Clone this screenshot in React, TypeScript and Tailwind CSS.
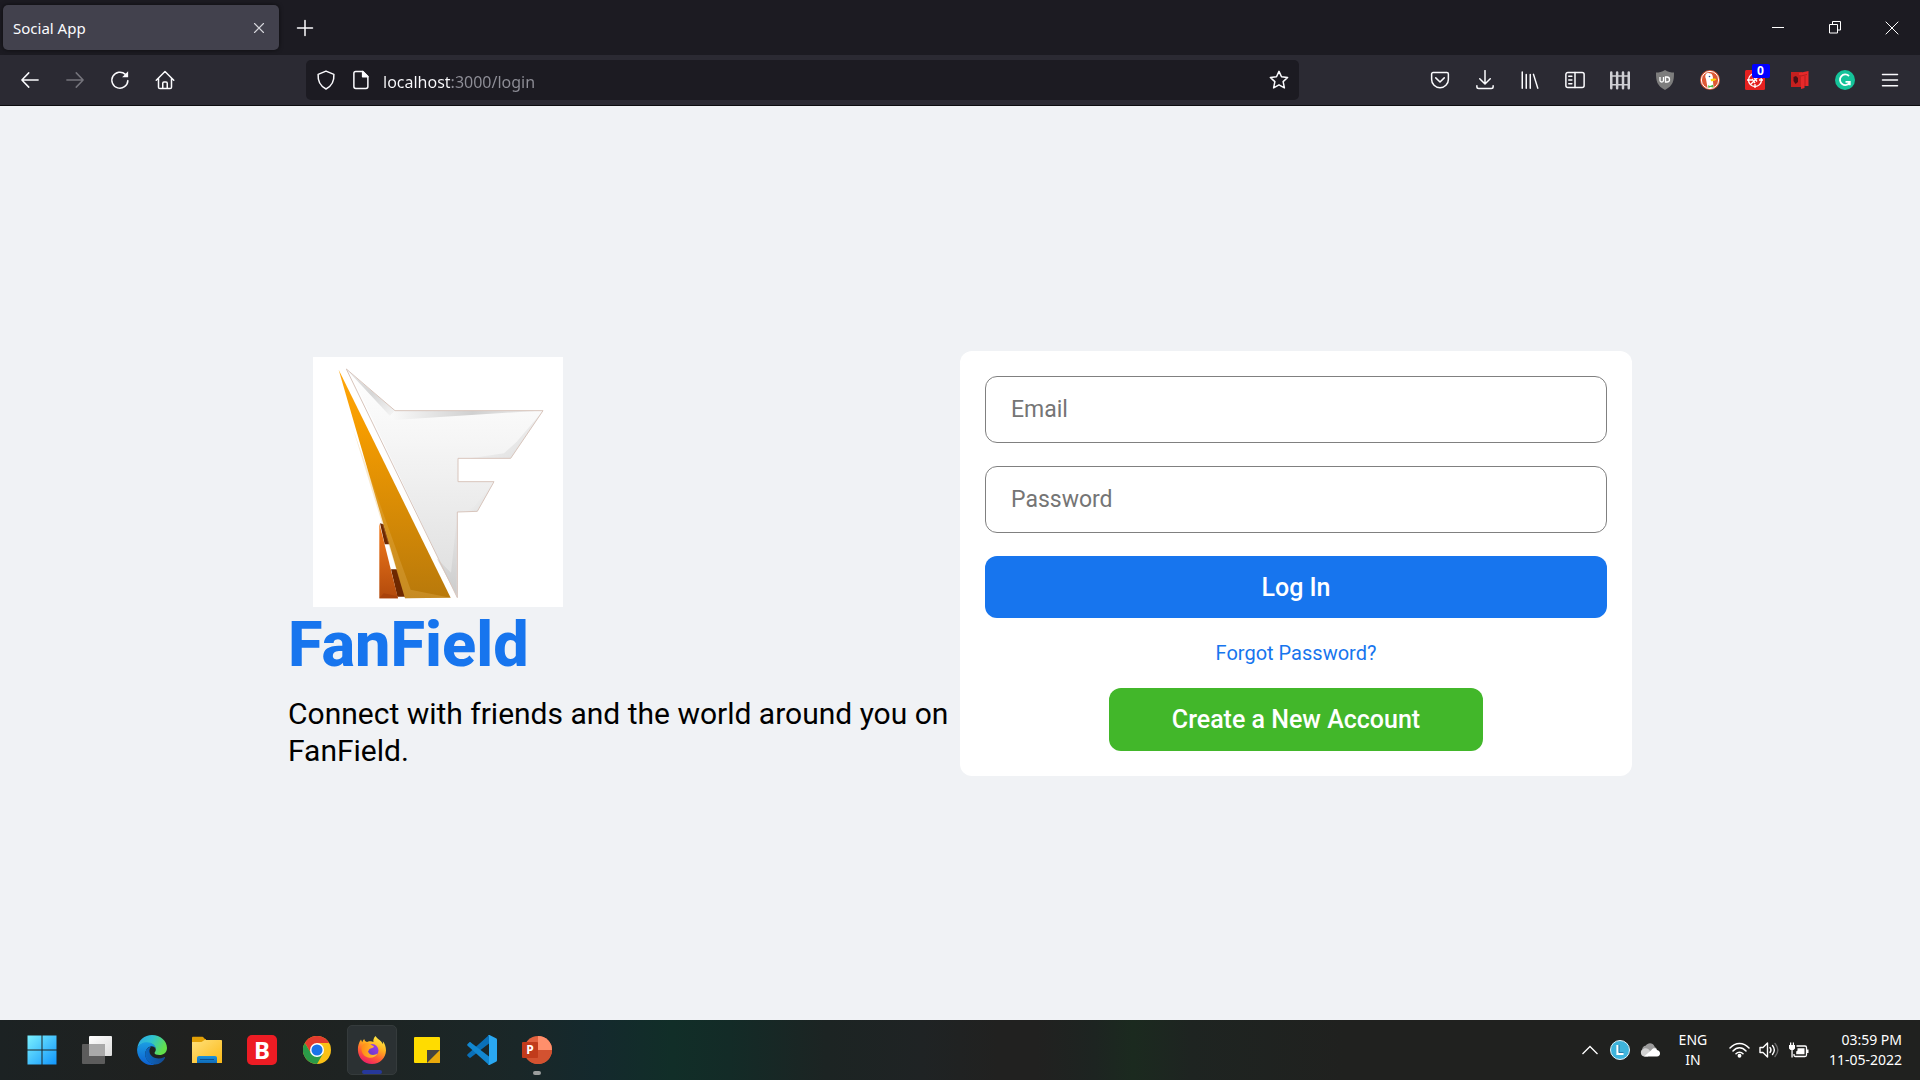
import type { ReactNode } from "react";

function IconButton({ label, className, children }: { label: string; className: string; children: ReactNode }) {
  return (
    <button type="button" aria-label={label} className={`flex shrink-0 items-center justify-center ${className}`}>
      {children}
    </button>
  );
}

function Line({ children, size = 20, color = "#fbfbfe", width = 1.2 }: { children: ReactNode; size?: number; color?: string; width?: number }) {
  return (
    <svg width={size} height={size} viewBox="0 0 16 16" fill="none" stroke={color} strokeWidth={width} strokeLinecap="round" strokeLinejoin="round" aria-hidden="true">
      {children}
    </svg>
  );
}

/* ---------- Browser chrome ---------- */

function TitleBar() {
  return (
    <div className="flex h-[55px] items-center bg-[#1c1b22] pl-[3px]">
      <div className="flex h-[45px] w-[276px] items-center justify-between rounded-[5px] bg-[#42414d] pr-2.5 pl-2.5 shadow-[0_0_4px_rgba(0,0,0,0.6)]">
        <button type="button" className="text-[15px] leading-5 text-[#fbfbfe]">Social App</button>
        <IconButton label="Close tab" className="size-5">
          <Line size={16} color="#d6d6dc" width={1.1}><path d="M3.500 3.500l9 9M12.500 3.500l-9 9" /></Line>
        </IconButton>
      </div>
      <IconButton label="New tab" className="ml-1.5 size-10">
        <Line size={20} width={1.2}><path d="M8 2v12M2 8h12" /></Line>
      </IconButton>
      <div className="ml-auto flex h-full">
        <IconButton label="Minimize" className="w-[57px]">
          <svg width="12" height="12" stroke="#fff" aria-hidden="true"><path d="M0 5.500h12" /></svg>
        </IconButton>
        <IconButton label="Restore" className="w-[57px]">
          <svg width="12" height="13" fill="none" stroke="#fff" aria-hidden="true"><path d="M.5 3.500h8v8.500h-8zM3.500 3.500v-3h8v8.500h-3" /></svg>
        </IconButton>
        <IconButton label="Close" className="w-[57px]">
          <svg width="14" height="14" stroke="#fff" aria-hidden="true"><path d="M.7.7l12.600 12.600M13.300.7L.7 13.300" /></svg>
        </IconButton>
      </div>
    </div>
  );
}

function UBlock() {
  return (
    <svg width="20" height="20" viewBox="0 0 20 20" aria-hidden="true">
      <path d="M10 0c3 2 6 2.500 9 2.500 0 9-1 13-9 17.500C2 15.500 1 11.500 1 2.500 4 2.500 7 2 10 0z" fill="#7d7d7d" />
      <path d="M5 7v3.500c0 2 3.500 2 3.500 0V7M10.500 7v5h1.500a2.500 2.500 0 0 0 0-5z" fill="none" stroke="#fff" strokeWidth="1.300" />
    </svg>
  );
}

function Duck() {
  return (
    <svg width="20" height="20" viewBox="0 0 20 20" aria-hidden="true">
      <circle cx="10" cy="10" r="10" fill="#de5833" />
      <circle cx="10" cy="10" r="8.600" fill="none" stroke="#fff" strokeWidth="1" />
      <path d="M6 4c1-1.500 5.500-1.500 6.500 1.500.8 2.500.5 4 .5 6l.5 6c-2 1-5 .8-6 .3L6 9C5 7.500 5 5 6 4z" fill="#fff" />
      <path d="M10.500 9.200c1.500-1 4-.8 5.800-.3.500 1-2 2-5.200 2.300z" fill="#fdd20a" />
      <path d="M8 15.200l2 .8 3-1.300.3 2.800-2.800-.6-2 1z" fill="#4cba3c" />
      <circle cx="9.500" cy="6.500" r=".8" fill="#2d4f8e" />
    </svg>
  );
}

function Target() {
  return (
    <span className="relative block">
      <svg width="20" height="20" viewBox="0 0 20 20" fill="none" stroke="#fff" strokeWidth="1.300" aria-hidden="true">
        <rect width="20" height="20" rx="1.500" fill="#e5201f" stroke="none" />
        <circle cx="10" cy="10" r="6.500" />
        <path d="M10 14v4M2 10h5M14 10h4M5.500 14.500l9-9M7 9l3 4M9 7.500l3 4" />
      </svg>
      <span className="absolute -top-1.5 left-[7px] flex h-3.5 w-[18px] items-center justify-center rounded-[2px] bg-[#0000ff] text-[12px] leading-3 font-bold text-white">0</span>
    </span>
  );
}

function Toolbar() {
  return (
    <div className="flex h-[51px] items-center border-b border-[#0c0c0f] bg-[#2b2a33] pl-[7px]">
      <IconButton label="Back" className="h-10 w-[45px]">
        <Line><path d="M14.500 8h-13M7 2.300L1.500 8 7 13.700" /></Line>
      </IconButton>
      <IconButton label="Forward" className="h-10 w-[45px]">
        <Line color="#75747c"><path d="M1.500 8h13M9 2.300L14.500 8 9 13.700" /></Line>
      </IconButton>
      <IconButton label="Reload" className="h-10 w-[45px]">
        <Line><path d="M14.300 8.500A6.400 6.400 0 1 1 12.300 3.500" /><path d="M14.500 1v4.800H9.700z" fill="#fbfbfe" stroke="none" /></Line>
      </IconButton>
      <IconButton label="Home" className="h-10 w-[45px]">
        <Line><path d="M1 8.200L8 1.200l7 7M2.800 6.800v6.900c0 .7.500 1.100 1.100 1.100h8.200c.7 0 1.100-.5 1.100-1.100V6.800M6.200 14.500v-4c0-.6.4-1 1-1h1.600c.6 0 1 .4 1 1v4" /></Line>
      </IconButton>
      <div className="mr-[118px] ml-[119px] flex h-10 min-w-0 flex-1 items-center rounded-[5px] bg-[#1c1b22] px-2.5">
        <IconButton label="Tracking protection" className="size-5">
          <Line><path d="M8 .9l6.300 2.600c.3 4.500-1 9-6.300 11.700C2.700 12.500 1.400 8 1.700 3.500z" /></Line>
        </IconButton>
        <IconButton label="Site information" className="ml-[15px] size-5">
          <Line><path d="M3.800 1.200h5.700l4 4v8c0 .9-.6 1.500-1.500 1.500H3.800c-.9 0-1.500-.6-1.500-1.500V2.700c0-.9.6-1.500 1.500-1.500z" /><path d="M9.300 1.200v4.200h4.200z" fill="#fbfbfe" /></Line>
        </IconButton>
        <input
          type="text"
          aria-label="Address"
          defaultValue="localhost:3000/login"
          className="ml-3 h-10 min-w-0 flex-1 bg-[linear-gradient(90deg,#fbfbfe_68px,#8f8f98_68px)] bg-clip-text pt-[3px] text-[16px] leading-6 text-transparent outline-none"
        />
        <IconButton label="Bookmark" className="size-5">
          <Line><path d="M8 1.100l2 4.300 4.900.6-3.600 3.300 1 5L8 11.900l-4.300 2.400 1-5L1.100 6 6 5.400z" /></Line>
        </IconButton>
      </div>
      <div className="flex items-center pr-2">
        <IconButton label="Pocket" className="h-10 w-[45px]">
          <Line size={20}><path d="M2.500 2h11c.7 0 1.200.5 1.200 1.200V7.500a6.700 6.700 0 0 1-13.400 0V3.200C1.300 2.500 1.800 2 2.500 2zM4.600 6.300L8 9.600l3.400-3.300" /></Line>
        </IconButton>
        <IconButton label="Downloads" className="h-10 w-[45px]">
          <Line><path d="M8 .5v10.500M3.800 7L8 11.200 12.200 7M1.500 12.500v.8c0 .9.600 1.400 1.500 1.400h10c.9 0 1.500-.5 1.500-1.400v-.8" /></Line>
        </IconButton>
        <IconButton label="Library" className="h-10 w-[45px]">
          <Line><path d="M1.800 1.500v13M5 3.500v11M8.200 3.500v11M10.800 3.500l3.400 11" /></Line>
        </IconButton>
        <IconButton label="Sidebars" className="h-10 w-[45px]">
          <Line><rect x=".7" y="2" width="14.600" height="12" rx="1.600" /><path d="M8 2v12M3 5h2.500M3 8h2.500M3 11h2.500" /></Line>
        </IconButton>
        <IconButton label="Fence" className="h-10 w-[45px]">
          <Line color="#cfcfd4" width={2}><path d="M1 2v12.500M5.700 2v12.500M10.400 2v12.500M15 2v12.500" /><path d="M1 4.800h14M1 11.800h14" strokeWidth="1.200" /></Line>
        </IconButton>
        <IconButton label="uBlock Origin" className="h-10 w-[45px]"><UBlock /></IconButton>
        <IconButton label="DuckDuckGo" className="h-10 w-[45px]"><Duck /></IconButton>
        <IconButton label="Blocker" className="h-10 w-[45px]"><Target /></IconButton>
        <IconButton label="Notes" className="h-10 w-[45px]">
          <svg width="20" height="20" viewBox="0 0 20 20" aria-hidden="true">
            <path d="M1 2h11v15H1z" fill="#c4201f" />
            <path d="M9 3l9.500-2v15h-4v2L11 19V5H9z" fill="#e5292a" />
            <path d="M11 6l6-1.500M15 6v10" fill="none" stroke="#b81c1c" />
            <path d="M3.500 7l2.500-1 2 2v4l-2.500 2-2-3z" fill="#471016" />
          </svg>
        </IconButton>
        <IconButton label="Grammarly" className="h-10 w-[45px]">
          <svg width="20" height="20" viewBox="0 0 20 20" fill="none" stroke="#fff" strokeWidth="1.800" aria-hidden="true">
            <circle cx="10" cy="10" r="10" fill="#15c39a" stroke="none" />
            <path d="M14 6a5.300 5.300 0 1 0 .8 6.500M10.500 11.800h4.300v3.400" />
          </svg>
        </IconButton>
        <IconButton label="Menu" className="h-10 w-[45px]">
          <Line><path d="M2 3.500h12M2 8h12M2 12.500h12" /></Line>
        </IconButton>
      </div>
    </div>
  );
}

/* ---------- Login page ---------- */

function Logo() {
  return (
    <svg viewBox="99 51 750 750" className="ml-[25px] size-[250px] bg-white" role="img" aria-label="FanField logo">
      <defs>
        <linearGradient id="gold" x1="0" y1="0" x2="0" y2="1"><stop offset="0" stopColor="#ffa60a" /><stop offset=".25" stopColor="#f59c00" /><stop offset="1" stopColor="#b8790b" /></linearGradient>
        <linearGradient id="silver" x1="0" y1="0" x2="0" y2="1"><stop offset="0" stopColor="#ffffff" /><stop offset=".3" stopColor="#f6f6f6" /><stop offset="1" stopColor="#dddddd" /></linearGradient>
        <linearGradient id="rust" x1="0" y1="0" x2="0" y2="1"><stop offset="0" stopColor="#f57c1c" /><stop offset="1" stopColor="#b24a0c" /></linearGradient>
        <linearGradient id="topEdge" x1="0" y1="0" x2="1" y2="0"><stop offset="0" stopColor="#fafafa" /><stop offset=".55" stopColor="#d0d0d0" /><stop offset="1" stopColor="#efefef" /></linearGradient>
        <linearGradient id="slant" x1="0" y1="0" x2="1" y2="1"><stop offset="0" stopColor="#e2e2e2" /><stop offset=".5" stopColor="#d6d6d6" /><stop offset="1" stopColor="#f6f6f6" /></linearGradient>
        <linearGradient id="corner" x1="0" y1="0" x2="1" y2="1"><stop offset=".3" stopColor="#f4f4f4" /><stop offset="1" stopColor="#dcdcdc" /></linearGradient>
        <linearGradient id="foot" x1="0" y1="0" x2="0" y2="1"><stop offset="0" stopColor="#e6e6e6" /><stop offset="1" stopColor="#cccccc" /></linearGradient>
      </defs>
      <path d="M300 550L311 553L330 613H314z" fill="#6e2800" />
      <path d="M333 688H353L376 770H352z" fill="#6e2800" />
      <path d="M298 550L354 775H298z" fill="url(#rust)" />
      <path d="M298 775L311 760L350 768L354 775z" fill="#a8420a" />
      <path d="M176 89L512 773L375 775z" fill="url(#gold)" />
      <path d="M220 270L392 749L512 773L375 775z" fill="#e8b75c" fillOpacity=".3" />
      <path d="M199 87L345 212H789L692 355H534V425H642L592 514L532 516V773z" fill="url(#silver)" />
      <path d="M205 94L345 212L330 228z" fill="url(#slant)" />
      <path d="M330 228L345 212H780L480 231L345 240z" fill="url(#topEdge)" />
      <path d="M789 212L692 355H570L672 340L710 305z" fill="url(#corner)" />
      <path d="M642 425L592 514H545L582 500z" fill="url(#corner)" />
      <path d="M530 540V765L470 655L513 698z" fill="url(#foot)" />
      <path d="M199 87L480 665L228 132z" fill="#fff" fillOpacity=".8" />
      <path d="M199 87L345 212H789L692 355H534V425H642L592 514L532 516V773z" fill="none" stroke="#d8c5bc" strokeWidth="3" />
    </svg>
  );
}

const field =
  "h-[67px] w-full rounded-[12px] border border-[#808080] bg-white px-[25px] text-[23px] text-black placeholder:text-[#757575] outline-none";

function Login() {
  return (
    <main className="flex flex-1 items-center justify-center bg-[#f0f2f5] font-[Roboto,sans-serif]">
      <div className="flex w-[70%]">
        <section className="flex flex-1 flex-col justify-center">
          <Logo />
          <h1 className="mb-3 text-[63px] leading-[76px] font-extrabold text-[#1775ee]">FanField</h1>
          <p className="text-[30px] leading-[37px] text-black">Connect with friends and the world around you on FanField.</p>
        </section>
        <section className="flex flex-1 flex-col justify-center">
          <form className="flex flex-col items-center gap-[23px] rounded-[12px] bg-white p-[25px]">
            <input type="email" aria-label="Email" placeholder="Email" className={field} />
            <input type="password" aria-label="Password" placeholder="Password" className={field} />
            <button type="button" className="h-[62px] w-full rounded-[12px] bg-[#1775ee] pt-0.5 text-[25px] font-medium text-white">Log In</button>
            <a href="#forgot" className="text-[20px] leading-6 text-[#1775ee]">Forgot Password?</a>
            <button type="button" className="h-[63px] w-3/5 rounded-[12px] bg-[#42b72a] pt-0.5 text-[25px] font-medium text-white">Create a New Account</button>
          </form>
        </section>
      </div>
    </main>
  );
}

/* ---------- Taskbar ---------- */

function WindowsIcon() {
  return (
    <svg width="30" height="30" viewBox="0 0 30 30" aria-hidden="true">
      <defs><linearGradient id="win" gradientUnits="userSpaceOnUse" x1="0" y1="0" x2="30" y2="30"><stop stopColor="#7df3ff" /><stop offset="1" stopColor="#0f93fb" /></linearGradient></defs>
      <path d="M.5.5h14v14H.5zM15.500.5h14v14h-14zM.5 15.500h14v14H.5zM15.500 15.500h14v14h-14z" fill="url(#win)" />
    </svg>
  );
}

function TaskView() {
  return (
    <svg width="30" height="30" viewBox="0 0 30 30" aria-hidden="true">
      <defs><linearGradient id="tv" x1="0" y1="0" x2="1" y2="1"><stop stopColor="#fff" /><stop offset="1" stopColor="#dcdcdc" /></linearGradient></defs>
      <rect x="0" y="9" width="23" height="20" rx="1" fill="#5c5c5c" />
      <rect x="7" y="1" width="23" height="20" rx="1" fill="url(#tv)" />
      <path d="M7 9h16v12H7z" fill="#a9a9a9" />
    </svg>
  );
}

function Edge() {
  return (
    <svg width="30" height="30" viewBox="0 0 30 30" aria-hidden="true">
      <defs>
        <linearGradient id="e1" x1="0" y1="0" x2="1" y2=".4"><stop stopColor="#2ba5e8" /><stop offset=".5" stopColor="#2fc3cf" /><stop offset="1" stopColor="#62e04b" /></linearGradient>
        <linearGradient id="e2" x1="0" y1="0" x2="0" y2="1"><stop stopColor="#1b9de2" /><stop offset="1" stopColor="#0c5fd0" /></linearGradient>
        <linearGradient id="e3" x1="0" y1="0" x2="1" y2="0"><stop stopColor="#0b68c4" /><stop offset="1" stopColor="#154a8f" /></linearGradient>
      </defs>
      <path d="M.3 13C1.500 5 7.500 0 15 0c8.500 0 15 6 15 13 0 4.500-3.500 7-7.500 7-3 0-5-.8-5-2 0-.8 1.300-1.500 1.300-3.500C18.800 10 14 7.500 9 8 5 8.300 1.800 10.500.3 13z" fill="url(#e1)" />
      <path d="M.2 13.500C2 9 6 7.300 10 7.300c5 0 8.800 3 8.800 7 0 0-.8-3-4-3-4 0-6.500 4-6.500 8 0 6 5 9.700 9.700 10.200C16 30 15 30 14 30 6 29.500-.8 22 .2 13.500z" fill="url(#e2)" />
      <path d="M12 12.300C9 14 8 17 8.200 20c.5 5.500 5 9.500 10.300 9.500 4 0 7.800-3 9.500-6.500.3-.8-.3-1.200-1-.8-6 3-13.500.5-14.500-5.200-.3-2 .2-3.500 1.500-5.200z" fill="url(#e3)" />
    </svg>
  );
}

function Explorer() {
  return (
    <svg width="30" height="28" viewBox="0 0 30 28" aria-hidden="true">
      <defs>
        <linearGradient id="fold" x1="0" y1="0" x2="1" y2="1"><stop stopColor="#ffe07a" /><stop offset="1" stopColor="#fbb917" /></linearGradient>
        <linearGradient id="foldb" x1="0" y1="0" x2="0" y2="1"><stop stopColor="#1b93dd" /><stop offset="1" stopColor="#0f6ab8" /></linearGradient>
      </defs>
      <path d="M0 2c0-.8.400-1.200 1.200-1.200h9.300c1 0 2.500 3 3.500 3H0z" fill="#e2a006" />
      <path d="M0 3h14v6H0z" fill="#e2a006" />
      <path d="M0 6h9.500l3-2H29c.6 0 1 .4 1 1v22H0z" fill="url(#fold)" />
      <path d="M5 22c0-1.200.8-2 2-2h16c1.200 0 2 .8 2 2v5H5z" fill="url(#foldb)" />
      <path d="M8 23.500h14" stroke="#0b4f8f" />
    </svg>
  );
}

function Chrome() {
  return (
    <svg width="28" height="28" viewBox="0 0 48 48" aria-hidden="true">
      <circle cx="24" cy="24" r="24" fill="#fbc116" />
      <path d="M3.200 12A24 24 0 0 1 44.800 12H24L14 30z" fill="#e33b2e" />
      <path d="M3.200 12L14 30h20.500L24 48A24 24 0 0 1 3.200 12z" fill="#2a9a48" />
      <circle cx="24" cy="24" r="12" fill="#fff" />
      <circle cx="24" cy="24" r="9.500" fill="#1a73e8" />
    </svg>
  );
}

function Firefox() {
  return (
    <svg width="30" height="30" viewBox="0 0 30 30" aria-hidden="true">
      <defs>
        <linearGradient id="ff" x1=".8" y1="0" x2=".3" y2="1"><stop stopColor="#fff34a" /><stop offset=".4" stopColor="#ffae1f" /><stop offset=".7" stopColor="#ff5a36" /><stop offset="1" stopColor="#ec1a6b" /></linearGradient>
        <linearGradient id="ffh" x1="0" y1="0" x2="1" y2="0"><stop stopColor="#ff8b16" /><stop offset="1" stopColor="#ffc532" /></linearGradient>
        <linearGradient id="ffp" x1="1" y1="0" x2="0" y2="1"><stop stopColor="#a03cf0" /><stop offset="1" stopColor="#5b3bb8" /></linearGradient>
      </defs>
      <path d="M18.500 1c-2 2-2.500 4.500-2 6-1-.7-3-1-4.500-.8L10 7C8.500 6.500 7.500 5.500 7.200 4c-1 1-1.700 2-2 3.200L4 4.500C1.800 7.500.8 11 .9 15 1.200 23 7 29 15 29c8 0 13.800-6 14-13.500 0-4-1.300-7.300-3.200-9.300.3 1.300.3 2 .2 3C24.500 5.500 20 4 18.500 1z" fill="url(#ff)" />
      <circle cx="15" cy="15.500" r="6.500" fill="url(#ffp)" />
      <path d="M4.500 12c1-3 4-4.500 7.500-3.800L17 11.500c-.5 1.800-3 1.600-4.500 2.500-.8.600-.5 1.600-1.500 2.500 1.500 4.500 7 4 9.500 2-2 4-6 5-9.500 4C6 21 4 17 4.500 12z" fill="url(#ffh)" />
    </svg>
  );
}

function VsCode() {
  return (
    <svg width="30" height="30" viewBox="0 0 30 30" aria-hidden="true">
      <path d="M22 0L.6 19.300c-.6.600-.6 1.200 0 1.800l1.600 1.500c.5.400 1.100.4 1.600 0L22 8.500z" fill="#0a70b8" />
      <path d="M22 30L.6 10.700c-.6-.6-.6-1.200 0-1.800l1.600-1.500c.5-.4 1.100-.4 1.600 0L22 21.500z" fill="#1287d0" />
      <path d="M21 29.500c.6.600 1.300.6 2 .3l6-3c.6-.3 1-.8 1-1.500V4.700c0-.7-.4-1.200-1-1.500l-6-3c-.7-.3-1.400-.3-2 .3.500-.3 1 0 1 .7v27.600c0 .7-.5 1-1 .7z" fill="#2aa8f2" />
    </svg>
  );
}

function PowerPoint() {
  return (
    <span className="relative block">
      <svg width="30" height="30" viewBox="0 0 30 30" aria-hidden="true">
        <circle cx="16" cy="15" r="14" fill="#e2623f" />
        <path d="M16 1a14 14 0 0 1 14 14H16z" fill="#ff8f6b" />
        <path d="M2 15h28a14 14 0 0 1-28 0z" fill="#d35230" />
        <rect x="0" y="7" width="16" height="16" rx="1" fill="#c13b1b" />
      </svg>
      <span className="absolute top-[7px] left-0 w-4 text-center text-[12px] leading-4 font-bold text-white">P</span>
    </span>
  );
}

const apps: { name: string; icon: ReactNode; active?: boolean; running?: boolean }[] = [
  { name: "Start", icon: <WindowsIcon /> },
  { name: "Task View", icon: <TaskView /> },
  { name: "Microsoft Edge", icon: <Edge /> },
  { name: "File Explorer", icon: <Explorer /> },
  {
    name: "Bitdefender",
    icon: <span className="flex size-[30px] items-center justify-center rounded-[5px] bg-[#ed1c24] font-['Noto_Sans',sans-serif] text-[24px] leading-none font-bold text-white">B</span>,
  },
  { name: "Google Chrome", icon: <Chrome /> },
  { name: "Firefox", icon: <Firefox />, active: true },
  {
    name: "Sticky Notes",
    icon: (
      <svg width="26" height="26" viewBox="0 0 26 26" aria-hidden="true">
        <rect width="26" height="26" rx="1" fill="#ffdc00" />
        <path d="M13 26L26 13v12l-1 1z" fill="#e9a90c" />
        <path d="M13 13h13L13 26z" fill="#45433f" />
      </svg>
    ),
  },
  { name: "Visual Studio Code", icon: <VsCode /> },
  { name: "PowerPoint", icon: <PowerPoint />, running: true },
];

function Taskbar() {
  return (
    <footer className="flex h-[60px] items-center justify-between bg-[linear-gradient(90deg,#1c2223_0%,#20211f_10%,#1e2322_18%,#1a2728_27%,#14292d_31%,#112e28_35%,#132b27_38%,#1c2423_43%,#1f2324_48%,#212120_52%,#212120_54%,#1d2421_57%,#1b2a1f_59%,#1e2421_62%,#20211f_70%,#20211f_100%)] pr-[18px] pl-[17px]">
      <nav className="flex gap-[5px]">
        {apps.map((app) => (
          <button
            key={app.name}
            type="button"
            aria-label={app.name}
            className={`relative flex size-[50px] items-center justify-center rounded-[5px] ${app.active ? "border border-[#353b3c] bg-[#2b3133]" : ""}`}
          >
            {app.icon}
            {app.active && <span className="absolute bottom-0 h-1 w-5 rounded-full bg-[#26389a]" />}
            {app.running && <span className="absolute bottom-0 h-1 w-2 rounded-full bg-[#9b9e9e]" />}
          </button>
        ))}
      </nav>
      <div className="flex items-center text-[14px] leading-5 text-white">
        <IconButton label="Show hidden icons" className="h-10 w-[30px]">
          <svg width="16" height="10" fill="none" stroke="#fff" strokeWidth="1.300" aria-hidden="true"><path d="M.5 9L8 1.500 15.500 9" /></svg>
        </IconButton>
        <IconButton label="Lightshot" className="h-10 w-[30px]">
          <svg width="20" height="20" viewBox="0 0 20 20" aria-hidden="true">
            <circle cx="10" cy="10" r="9.500" fill="#3fb4dc" stroke="#e4f4fb" />
            <path d="M7.500 5v9h6" fill="none" stroke="#fff" strokeWidth="2.200" />
            <path d="M9 5v7.500h4.500" fill="none" stroke="#1a6fa0" strokeWidth=".8" />
          </svg>
        </IconButton>
        <IconButton label="OneDrive" className="h-10 w-[30px]">
          <svg width="20" height="14" viewBox="0 0 20 14" aria-hidden="true">
            <path d="M3 9C1 6 3 3 5.500 2.800 8-.8 13-.5 14.500 3.500L17 6l-8 4z" fill="#9b9b9b" />
            <path d="M4.500 13.500a4 4 0 0 1-.8-7.800C6 4.500 9 6 10 8L8 13.500z" fill="#d2d2d2" />
            <path d="M4 13.500L11.500 7c1-2.500 5-2.500 5.500 0 4 .5 4 6.500 0 6.500z" fill="#fff" />
          </svg>
        </IconButton>
        <button type="button" aria-label="Language" className="w-14 text-center">ENG<br />IN</button>
        <button type="button" aria-label="Network, volume and battery" className="ml-1 flex h-10 items-center gap-[9px] px-1">
          <svg width="21" height="16" viewBox="0 0 21 16" fill="none" stroke="#fff" strokeWidth="1.500" strokeLinecap="round" aria-hidden="true">
            <path d="M1 6c5.500-6 13.500-6 19 0M4 9c4-4.300 9-4.300 13 0M7 11.800c2-2.200 5-2.200 7 0" />
            <circle cx="10.500" cy="13.800" r="1.200" fill="#fff" />
          </svg>
          <svg width="21" height="18" viewBox="0 0 21 18" fill="none" stroke="#fff" strokeWidth="1.400" strokeLinecap="round" strokeLinejoin="round" aria-hidden="true">
            <path d="M1 6.500h3L8.500 2v14L4 11.500H1zM11 6.500c1.200 1.500 1.200 3.500 0 5M13.500 4.500c2.200 2.700 2.200 6.300 0 9" />
            <path d="M16 2.500c3.500 4 3.500 9 0 13" stroke="#6a6a6a" />
          </svg>
          <svg width="20" height="17" viewBox="0 0 20 17" fill="none" stroke="#fff" strokeWidth="1.300" strokeLinejoin="round" aria-hidden="true">
            <path d="M7.500 4H16c1 0 1.500.5 1.500 1.500V13c0 1-.5 1.500-1.500 1.500H6.500c-1 0-1.500-.5-1.500-1.500v-1" />
            <path d="M18.500 7.500v3.500" strokeWidth="2" />
            <path d="M8.500 6.200h7v6H7.200V9.500l1.300-1z" fill="#fff" stroke="none" />
            <path d="M0 3h6v3.500L4.500 8h-3L0 6.500zM1 .5h1.300V3H1zM3.800.5H5V3H3.800zM2.400 8h1.300v7.500H2.400z" fill="#fff" stroke="none" />
          </svg>
        </button>
        <button type="button" aria-label="Clock" className="ml-4 text-right">03:59 PM<br />11-05-2022</button>
      </div>
    </footer>
  );
}

export default function App() {
  return (
    <div className="flex min-h-screen flex-col font-['Noto_Sans',sans-serif]">
      <header>
        <TitleBar />
        <Toolbar />
      </header>
      <Login />
      <Taskbar />
    </div>
  );
}
